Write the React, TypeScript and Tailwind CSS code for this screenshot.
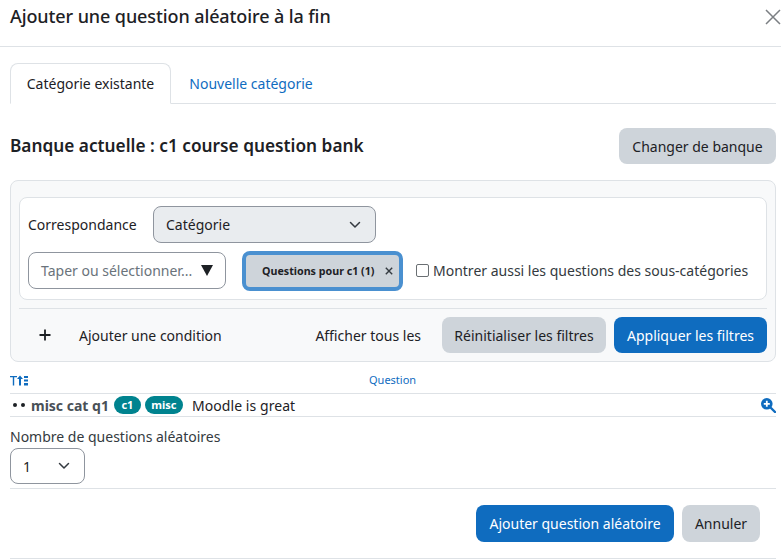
import React from "react";

function Chevron() {
  return (
    <svg width="12" height="8" viewBox="0 0 12 8" fill="none">
      <path d="M1.5 1.5 L6 6 L10.5 1.5" stroke="#343a40" strokeWidth="1.5" strokeLinecap="round" strokeLinejoin="round" />
    </svg>
  );
}

export default function App() {
  return (
    <div className="w-[781px] h-[560px] overflow-hidden bg-white font-['Noto_Sans',sans-serif] text-[14px] text-[#1d2125]">
      <header className="h-[47px] border-b border-[#dee2e6] pl-[10px] flex justify-between items-start">
        <h1 className="text-[18px] leading-[33px] font-medium tracking-[-0.1px]">Ajouter une question aléatoire à la fin</h1>
        <svg className="mt-[9px]" width="16" height="16" viewBox="0 0 16 16" fill="none">
          <path d="M1 1 L15 15 M15 1 L1 15" stroke="#7b7f83" strokeWidth="1.5" />
        </svg>
      </header>

      <div className="pl-[10px] pr-[5px]">
        <nav className="mt-[16px] h-[41px] border-b border-[#dee2e6] flex">
          <div className="w-[161px] h-[41px] border border-b-white border-[#dee2e6] rounded-t-[8px] bg-white flex items-center justify-center">Catégorie existante</div>
          <div className="w-[160px] h-[40px] flex items-center justify-center text-[#0f6cbf]">Nouvelle catégorie</div>
        </nav>

        <div className="mt-[24px] flex justify-between items-center h-[36px]">
          <h2 className="text-[17.25px] leading-[38px] font-semibold text-[#1d2125]">Banque actuelle : c1 course question bank</h2>
          <button className="w-[157px] h-[36px] rounded-[8px] bg-[#ced4da]">Changer de banque</button>
        </div>

        <section className="mt-[16px] h-[182px] border border-[#dee2e6] rounded-[8px] bg-[#f8f9fa] px-[8px] pt-[16px]">
          <div className="h-[103px] border border-[#dee2e6] rounded-[8px] bg-white px-[8px] pt-[8px]">
            <div className="flex items-center h-[37px]">
              <span className="w-[125px]">Correspondance</span>
              <div className="w-[223px] h-[37px] border border-[#8f959e] rounded-[8px] bg-[#e9ecef] flex items-center justify-between pl-[12px] pr-[14px]">
                <span>Catégorie</span>
                <Chevron />
              </div>
            </div>
            <div className="flex items-start mt-[8px]">
              <div className="mt-[1px] w-[198px] h-[37px] border border-[#8f959e] rounded-[8px] bg-white flex items-center justify-between pl-[12px] pr-[12px]">
                <span className="text-[#6a737b]">Taper ou sélectionner...</span>
                <span className="w-0 h-0 border-l-[6px] border-r-[6px] border-t-[11px] border-l-transparent border-r-transparent border-t-[#1d2125]"></span>
              </div>
              <div className="ml-[16px] w-[161px] h-[40px] rounded-[8px] border-[4px] border-[#4a90d0] bg-[#ced4da] flex items-center justify-between pl-[16px] pr-[6px]">
                <span className="text-[10.7px] font-bold">Questions pour c1 (1)</span>
                <svg width="8" height="8" viewBox="0 0 8 8" fill="none">
                  <path d="M0.8 0.8 L7.2 7.2 M7.2 0.8 L0.8 7.2" stroke="#343a40" strokeWidth="1.4" />
                </svg>
              </div>
              <label className="ml-[13px] h-[38px] flex items-center gap-[4px]">
                <span className="w-[13px] h-[13px] border border-[#6a6f73] rounded-[2px] bg-white"></span>
                <span className="text-[#343a40]">Montrer aussi les questions des sous-catégories</span>
              </label>
            </div>
          </div>
          <div className="mt-[8px] border-t border-[#dee2e6] pt-[8px] flex items-center h-[45px]">
            <span className="w-[52px] flex justify-center">
              <svg width="14" height="14" viewBox="0 0 14 14"><path d="M7 1.5 V12.5 M1.5 7 H12.5" stroke="#1d2125" strokeWidth="1.8" /></svg>
            </span>
            <span className="ml-[8px]">Ajouter une condition</span>
            <span className="ml-auto">Afficher tous les</span>
            <button className="ml-[21px] w-[164px] h-[36px] rounded-[8px] bg-[#ced4da]">Réinitialiser les filtres</button>
            <button className="ml-[8px] w-[153px] h-[36px] rounded-[8px] bg-[#0f6cbf] text-white">Appliquer les filtres</button>
          </div>
        </section>

        <div className="h-[32px] border-b border-[#dee2e6] flex items-center text-[#0f6cbf] text-[11px] pt-[5px]">
          <span className="w-[359px] flex items-center">
            <svg width="18" height="11" viewBox="0 0 18 11" fill="#0f6cbf">
              <path d="M0 1 H7 V2.3 H4.2 V10.5 H2.8 V2.3 H0 Z" />
              <path d="M10 0.5 L13 4 H11 V10.5 H9 V4 H7 Z" />
              <rect x="14" y="1" width="4" height="2" />
              <rect x="14" y="4.5" width="4" height="2" />
              <rect x="14" y="8" width="4" height="2.5" />
            </svg>
          </span>
          <span>Question</span>
        </div>

        <div className="h-[23px] border-b border-[#dee2e6] flex items-center">
          <span className="w-[21px] pl-[3px] flex gap-[4px]">
            <span className="w-[4px] h-[4px] rounded-full bg-[#1d2125]"></span>
            <span className="w-[4px] h-[4px] rounded-full bg-[#1d2125]"></span>
          </span>
          <span className="font-bold text-[#495057]">misc cat q1</span>
          <span className="ml-[5px] h-[18px] w-[27px] rounded-full bg-[#00838f] text-white text-[11px] font-bold flex items-center justify-center">c1</span>
          <span className="ml-[4px] h-[18px] w-[38px] rounded-full bg-[#00838f] text-white text-[11px] font-bold flex items-center justify-center">misc</span>
          <span className="ml-[9px] tracking-[0.07px]">Moodle is great</span>
          <svg className="ml-auto" width="16" height="16" viewBox="0 0 16 16">
            <circle cx="6.8" cy="6.8" r="5.8" fill="#0f6cbf" />
            <path d="M11 11 L15 15" stroke="#0f6cbf" strokeWidth="2.4" strokeLinecap="round" />
            <path d="M6.8 3.8 V9.8 M3.8 6.8 H9.8" stroke="#fff" strokeWidth="1.8" />
          </svg>
        </div>

        <div className="h-[72px] border-b border-[#dee2e6] pt-[9px]">
          <div className="leading-[22px] text-[#343a40]">Nombre de questions aléatoires</div>
          <div className="w-[75px] h-[36px] border border-[#8f959e] rounded-[8px] flex items-center justify-between pl-[12px] pr-[14px]">
            <span>1</span>
            <Chevron />
          </div>
        </div>

        <div className="h-[70px] border-b border-[#dee2e6] flex items-center justify-end pr-[16px]">
          <button className="w-[198px] h-[37px] rounded-[8px] bg-[#0f6cbf] text-white">Ajouter question aléatoire</button>
          <button className="ml-[8px] w-[78px] h-[37px] rounded-[8px] bg-[#ced4da]">Annuler</button>
        </div>
      </div>
    </div>
  );
}
